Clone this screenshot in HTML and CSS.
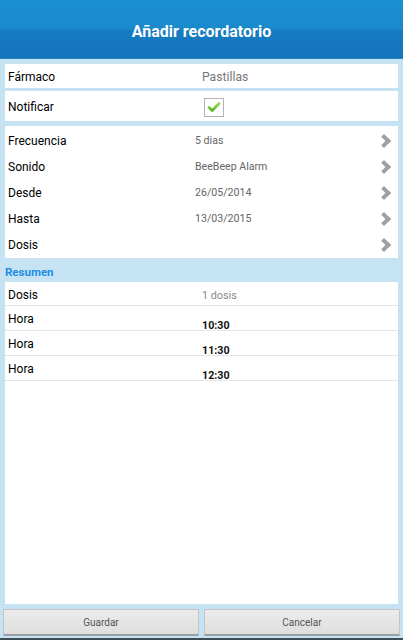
FILE: index.html
```html
<!DOCTYPE html>
<html lang="es">
<head>
<meta charset="utf-8">
<title>Añadir recordatorio</title>
<link rel="stylesheet" href="styles.css">
</head>
<body>
<div class="screen">
  <header class="topbar">
    <h1 class="title">Añadir recordatorio</h1>
  </header>

  <main class="content">
    <section class="card card-single">
      <div class="row row-drug">
        <span class="label">Fármaco</span>
        <span class="value value-large">Pastillas</span>
      </div>
    </section>

    <section class="card card-single">
      <div class="row row-notify">
        <span class="label">Notificar</span>
        <span class="checkbox">
          <svg width="14" height="12" viewBox="0 0 14 12" aria-hidden="true">
            <defs>
              <linearGradient id="tick" x1="0" y1="0" x2="0" y2="1">
                <stop offset="0" stop-color="#9ad852"/>
                <stop offset="1" stop-color="#5bb52c"/>
              </linearGradient>
            </defs>
            <path d="M2 6.5 L5.2 9.6 L12 2.6" fill="none" stroke="url(#tick)" stroke-width="2.8" stroke-linecap="round" stroke-linejoin="round"/>
          </svg>
        </span>
      </div>
    </section>

    <section class="card card-list">
      <div class="row row-nav">
        <span class="label">Frecuencia</span>
        <span class="value">5 dias</span>
        <span class="chevron"></span>
      </div>
      <div class="row row-nav">
        <span class="label">Sonido</span>
        <span class="value">BeeBeep Alarm</span>
        <span class="chevron"></span>
      </div>
      <div class="row row-nav">
        <span class="label">Desde</span>
        <span class="value">26/05/2014</span>
        <span class="chevron"></span>
      </div>
      <div class="row row-nav">
        <span class="label">Hasta</span>
        <span class="value">13/03/2015</span>
        <span class="chevron"></span>
      </div>
      <div class="row row-nav">
        <span class="label">Dosis</span>
        <span class="value"></span>
        <span class="chevron"></span>
      </div>
    </section>

    <h2 class="section-title">Resumen</h2>

    <section class="card card-summary">
      <div class="row row-sum">
        <span class="label">Dosis</span>
        <span class="value value-sum">1 dosis</span>
      </div>
      <div class="row row-sum row-time">
        <span class="label">Hora</span>
        <span class="time">10:30</span>
      </div>
      <div class="row row-sum row-time">
        <span class="label">Hora</span>
        <span class="time">11:30</span>
      </div>
      <div class="row row-sum row-time">
        <span class="label">Hora</span>
        <span class="time">12:30</span>
      </div>
    </section>
  </main>

  <footer class="actions">
    <button class="btn" type="button">Guardar</button>
    <button class="btn" type="button">Cancelar</button>
  </footer>
</div>
</body>
</html>
```

FILE: styles.css
```css
* {
  box-sizing: border-box;
}

html, body {
  margin: 0;
  padding: 0;
}

body {
  font-family: Roboto, "Noto Sans", "DejaVu Sans", sans-serif;
  background: #c6e3f3;
  color: #000;
}

.screen {
  width: 403px;
  height: 640px;
  display: flex;
  flex-direction: column;
  background: #c6e3f3;
  border-bottom: 2px solid #3d4d58;
}

/* Title bar */
.topbar {
  height: 59px;
  flex: none;
  display: flex;
  align-items: center;
  justify-content: center;
  background: linear-gradient(to bottom, #1b8fd0 0%, #1a8acd 50%, #167cc2 52%, #1474bb 100%);
  border-bottom: 1px solid #2a86c6;
}

.title {
  margin: 0;
  color: #fff;
  font-size: 16px;
  font-weight: 700;
  padding-top: 4px;
}

/* Form area */
.content {
  flex: 1;
  display: flex;
  flex-direction: column;
  padding: 5px 5px 0 5px;
}

.card {
  background: #fff;
}

.card-single + .card-single {
  margin-top: 3px;
}

.card-list {
  margin-top: 5px;
  padding: 1px 0;
}

.row {
  display: grid;
  grid-template-columns: 187px 1fr 22px;
  align-items: center;
  padding-left: 3px;
}

.label {
  font-size: 12px;
  color: #000;
}

.value {
  font-size: 10.6px;
  color: #666;
}

.value-large {
  font-size: 12.2px;
  color: #777;
  padding-left: 7px;
}

.row-drug {
  height: 24px;
  padding-top: 1px;
}

.row-notify {
  height: 30px;
  padding-top: 2px;
}

.checkbox {
  margin-left: 9px;
  width: 20px;
  height: 19px;
  border: 1px solid #b3b3b3;
  background: #fff;
  display: flex;
  align-items: center;
  justify-content: center;
}

.row-nav {
  height: 26px;
  padding-top: 1px;
}

/* Disclosure arrow drawn from two borders */
.chevron {
  width: 10px;
  height: 10px;
  border-top: 4px solid #a0a0a0;
  border-right: 4px solid #a0a0a0;
  transform: rotate(45deg);
  margin-left: 3px;
}

/* Summary */
.section-title {
  margin: 0;
  height: 24px;
  display: flex;
  align-items: center;
  font-size: 11.5px;
  font-weight: 700;
  color: #1c8de3;
  padding-top: 3px;
}

.card-summary {
  flex: 1;
  margin-bottom: 5px;
}

.row-sum {
  height: 25px;
  border-bottom: 1px solid #e6e6e6;
  grid-template-columns: 187px 1fr;
}

.row-sum:first-child {
  height: 24px;
}

.value-sum {
  font-size: 10.8px;
  color: #888;
  padding-left: 7px;
  padding-top: 3px;
}

.row-sum:first-child .label {
  padding-top: 2px;
}

.row-time {
  align-items: start;
}

.row-time .label {
  padding-top: 6px;
}

.time {
  font-size: 10.7px;
  font-weight: 700;
  color: #111;
  padding-left: 7px;
  padding-top: 13px;
}

/* Bottom buttons */
.actions {
  flex: none;
  display: flex;
  gap: 5px;
  padding: 0 3px 2px 3px;
}

.btn {
  flex: 1;
  height: 27px;
  font-family: Roboto, "Noto Sans", sans-serif;
  font-size: 10px;
  color: #555;
  background: linear-gradient(to bottom, #ececec 0%, #dedede 100%);
  border: 1px solid #c4c4c4;
  border-bottom: 2px solid #9aa0a4;
  border-radius: 1px;
  padding: 0;
}
```
